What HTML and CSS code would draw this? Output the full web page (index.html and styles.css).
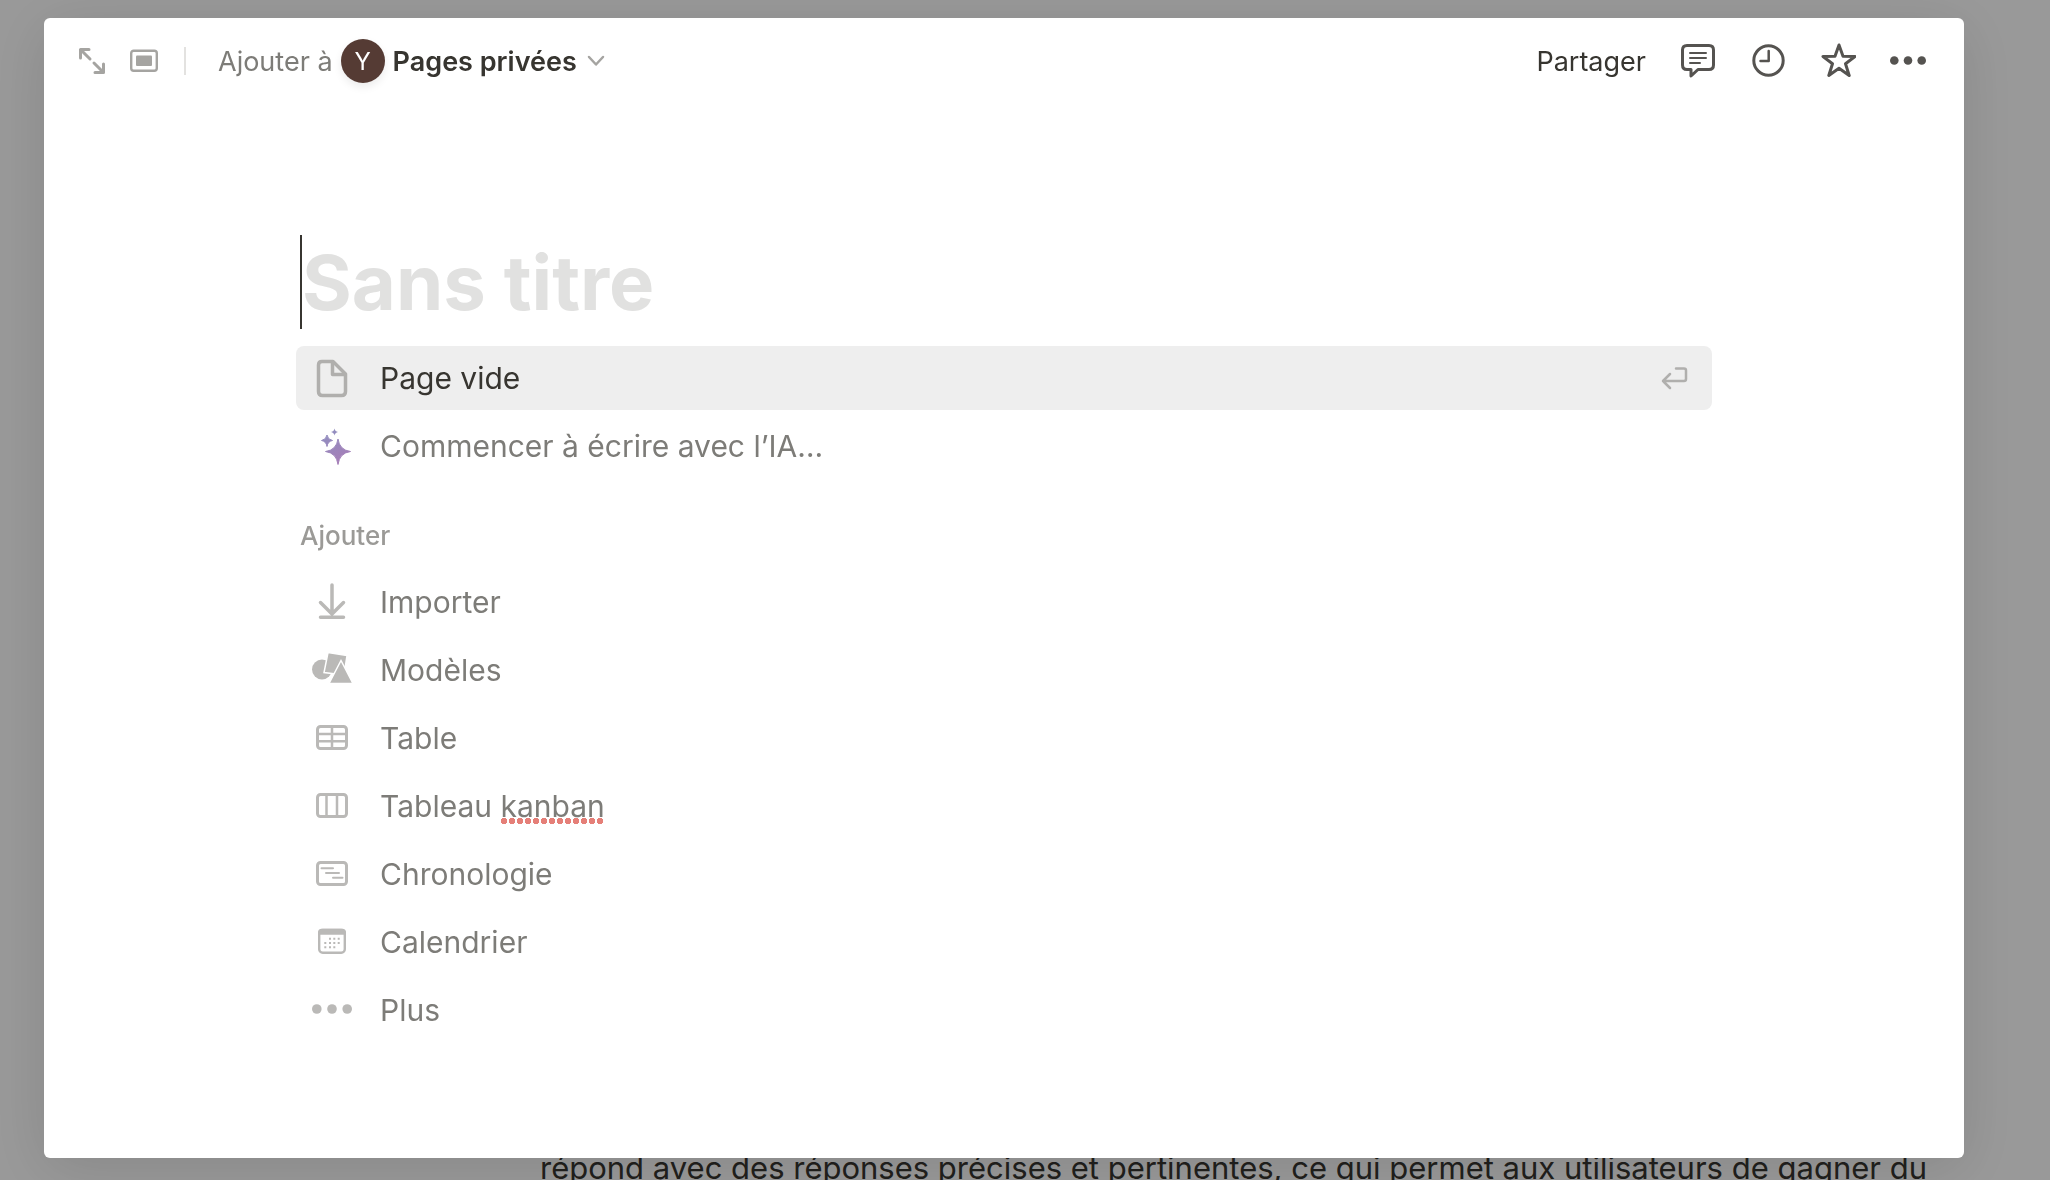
FILE: index.html
```html
<!DOCTYPE html>
<html lang="fr">
<head>
    <meta charset="UTF-8">
    <title>Sans titre</title>
    <link rel="stylesheet" href="styles.css">
</head>
<body>
<main class="page">
    <p class="page-text">répond avec des réponses précises et pertinentes, ce qui permet aux utilisateurs de gagner du</p>
</main>

<div class="overlay">
    <div class="modal" role="dialog" aria-label="Nouvelle page">
        <header class="topbar">
            <div class="topbar-left">
                <button type="button" class="icon-btn" aria-label="Ouvrir en pleine page">
                    <svg width="28" height="28" viewBox="0 0 28 28" fill="none" stroke="#a5a4a1" stroke-width="3" stroke-linecap="round" stroke-linejoin="round">
                        <path d="M2.500 11V2.500H11M2.500 2.500L12 12M16 16L25.500 25.500M25.500 17V25.500H17"/>
                    </svg>
                </button>
                <button type="button" class="icon-btn" aria-label="Changer l'affichage">
                    <svg width="28" height="28" viewBox="0 0 28 28">
                        <rect x="1.200" y="3.700" width="25.600" height="20" rx="2.500" fill="none" stroke="#a5a4a1" stroke-width="2.400"/>
                        <rect x="6" y="8.500" width="16" height="10.500" rx="1" fill="#a5a4a1"/>
                    </svg>
                </button>
                <span class="divider"></span>
                <button type="button" class="location">
                    <span class="muted">Ajouter à</span>
                    <span class="avatar">Y</span>
                    <span class="location-name">Pages privées</span>
                    <svg class="chevron" width="18" height="12" viewBox="0 0 18 12" fill="none" stroke="#a5a4a1" stroke-width="2.500" stroke-linecap="round" stroke-linejoin="round">
                        <path d="M2 2L9 9.500L16 2"/>
                    </svg>
                </button>
            </div>
            <div class="topbar-right">
                <button type="button" class="share">Partager</button>
                <button type="button" class="icon-btn" aria-label="Commentaires">
                    <svg width="36" height="36" viewBox="0 0 36 36" fill="none" stroke="#555350" stroke-width="3" stroke-linecap="round" stroke-linejoin="round">
                        <path d="M7 2.500H29Q33.500 2.500 33.500 7V22Q33.500 26.500 29 26.500H18L11 33V26.500H7Q2.500 26.500 2.500 22V7Q2.500 2.500 7 2.500Z"/>
                        <path stroke-width="2" d="M10 10H26M10 15H26M10 20H20"/>
                    </svg>
                </button>
                <button type="button" class="icon-btn" aria-label="Historique">
                    <svg width="36" height="36" viewBox="0 0 36 36" fill="none" stroke="#555350" stroke-width="3" stroke-linecap="round" stroke-linejoin="round">
                        <circle cx="18.500" cy="17.500" r="14.700"/>
                        <path stroke-width="2.500" d="M18.700 8V18H10.500"/>
                    </svg>
                </button>
                <button type="button" class="icon-btn" aria-label="Favoris">
                    <svg width="36" height="36" viewBox="0 0 36 36" fill="none" stroke="#555350" stroke-width="3" stroke-linejoin="round">
                        <path d="M19 2L23 13.200L35 13.500L25.500 20.700L29.200 32.500L19 25.300L8.800 32.500L12.500 20.700L3 13.500L15 13.200Z"/>
                    </svg>
                </button>
                <button type="button" class="icon-btn" aria-label="Autres actions">
                    <svg width="36" height="36" viewBox="0 0 36 36" fill="#555350">
                        <circle cx="4.300" cy="17.500" r="4.300"/>
                        <circle cx="18" cy="17.500" r="4.300"/>
                        <circle cx="31.700" cy="17.500" r="4.300"/>
                    </svg>
                </button>
            </div>
        </header>

        <div class="content">
            <div class="title">
                <input type="text" class="title-input" placeholder="Sans titre" aria-label="Titre de la page">
            </div>

            <div class="menu">
                <button type="button" class="item active">
                    <svg class="item-icon" viewBox="0 0 40 40" fill="none" stroke="#b0afad" stroke-width="3.500" stroke-linejoin="round">
                        <path d="M10 3.500H21L33.500 16V33.500Q33.500 37.500 29.500 37.500H10.500Q6.500 37.500 6.500 33.500V7Q6.500 3.500 10 3.500Z"/>
                        <path d="M20.500 4V16.500H33"/>
                    </svg>
                    <span>Page vide</span>
                    <svg class="enter" width="28" height="24" viewBox="0 0 28 24" fill="none" stroke="#b0afad" stroke-width="2.500" stroke-linecap="round" stroke-linejoin="round">
                        <path d="M16 2.500H24Q26 2.500 26 4.500V13Q26 15 24 15H3M10 8L3 15L10 22"/>
                    </svg>
                </button>
                <button type="button" class="item">
                    <svg class="item-icon" viewBox="0 0 40 40">
                        <defs>
                            <linearGradient id="spark" gradientUnits="userSpaceOnUse" x1="14" y1="4" x2="30" y2="34">
                                <stop offset="0" stop-color="#8f8fc0"/>
                                <stop offset="1" stop-color="#a57fb8"/>
                            </linearGradient>
                        </defs>
                        <g fill="url(#spark)">
                            <path d="M26 13Q27.500 24 38.500 25.500Q27.500 27 26 38.500Q24.500 27 13.500 25.500Q24.500 24 26 13Z" stroke="url(#spark)" stroke-width="1"/>
                            <path d="M15 9Q15.800 13.700 20.500 14.500Q15.800 15.300 15 20.500Q14.200 15.300 9.500 14.500Q14.200 13.700 15 9Z" stroke="url(#spark)" stroke-width="1"/>
                            <path d="M22.500 2.500Q23 5.500 26 6Q23 6.500 22.500 9.500Q22 6.500 19 6Q22 5.500 22.500 2.500Z"/>
                        </g>
                    </svg>
                    <span>Commencer à écrire avec l’IA…</span>
                </button>
            </div>

            <h2 class="section">Ajouter</h2>

            <div class="menu">
                <button type="button" class="item">
                    <svg class="item-icon" viewBox="0 0 40 40" fill="none" stroke="#bab9b7" stroke-width="3.500" stroke-linecap="round" stroke-linejoin="round">
                        <path d="M20 3V32M8.500 20.500L20 32L31.500 20.500M8.500 35.300H31.500"/>
                    </svg>
                    <span>Importer</span>
                </button>
                <button type="button" class="item">
                    <svg class="item-icon" viewBox="0 0 40 40" fill="#bab9b7">
                        <circle cx="10" cy="19.500" r="10"/>
                        <path d="M16 2.500L35 5.500L32 25L12 22.500Z" stroke="#fff" stroke-width="1.500"/>
                        <path d="M29 10.500L41 33.500H17Z" stroke="#fff" stroke-width="1.500"/>
                    </svg>
                    <span>Modèles</span>
                </button>
                <button type="button" class="item">
                    <svg class="item-icon" viewBox="0 0 40 40" fill="none" stroke="#bab9b7" stroke-width="3">
                        <rect x="5.500" y="8.500" width="29" height="22" rx="3"/>
                        <path stroke-width="2.500" d="M20 8V31M6 16H34M6 23.300H34"/>
                    </svg>
                    <span>Table</span>
                </button>
                <button type="button" class="item">
                    <svg class="item-icon" viewBox="0 0 40 40" fill="none" stroke="#bab9b7" stroke-width="3">
                        <rect x="5.500" y="8.500" width="29" height="22" rx="3"/>
                        <path stroke-width="2.500" d="M14.500 8V31M25 8V31"/>
                    </svg>
                    <span>Tableau <span class="misspelled">kanban</span></span>
                </button>
                <button type="button" class="item">
                    <svg class="item-icon" viewBox="0 0 40 40" fill="none" stroke="#bab9b7" stroke-width="3">
                        <rect x="5.500" y="8.500" width="29" height="22" rx="3"/>
                        <path stroke-width="2" stroke-linecap="round" d="M9.500 14.300H21M14 19H27M21 23.700H30.500"/>
                    </svg>
                    <span>Chronologie</span>
                </button>
                <button type="button" class="item">
                    <svg class="item-icon" viewBox="0 0 40 40" fill="#bab9b7">
                        <rect x="7.200" y="8" width="25.600" height="22.800" rx="3.500" fill="none" stroke="#bab9b7" stroke-width="2.400"/>
                        <path d="M6 12.700V10.500Q6 6.800 9.700 6.800H30.300Q34 6.800 34 10.500V12.700Z"/>
                        <path d="M17 15.700h2v2h-2zM21.300 15.700h2v2h-2zM25.700 15.700h2v2h-2zM12.300 20h2v2h-2zM17 20h2v2h-2zM21.300 20h2v2h-2zM25.700 20h2v2h-2zM12.300 24.300h2v2h-2zM17 24.300h2v2h-2zM21.300 24.300h2v2h-2z"/>
                    </svg>
                    <span>Calendrier</span>
                </button>
                <button type="button" class="item">
                    <svg class="item-icon" viewBox="0 0 40 40" fill="#bab9b7">
                        <circle cx="4.800" cy="19" r="4.800"/>
                        <circle cx="20" cy="19" r="4.800"/>
                        <circle cx="35.200" cy="19" r="4.800"/>
                    </svg>
                    <span>Plus</span>
                </button>
            </div>
        </div>
    </div>
</div>
</body>
</html>
```
FILE: styles.css
```css
* {
    box-sizing: border-box;
}
body {
    margin: 0;
    font-family: Inter, "Liberation Sans", sans-serif;
    color: #373530;
    background-color: white;
}
button {
    font: inherit;
    color: inherit;
    background: none;
    border: none;
    padding: 0;
    cursor: pointer;
}
svg {
    display: block;
    flex-shrink: 0;
}

/* page behind the dialog */
.page {
    display: flex;
    align-items: flex-end;
    height: 100vh;
    padding-left: 540px;
    overflow: hidden;
}
.page-text {
    margin: 0 0 -12px;
    font-size: 31px;
    line-height: 48px;
    white-space: nowrap;
}

.overlay {
    position: fixed;
    inset: 0;
    display: flex;
    padding: 18px 86px 22px 44px;
    background-color: rgba(0, 0, 0, 0.4);
}
.modal {
    flex: 1;
    background-color: white;
    border-radius: 6px;
    box-shadow: 0 10px 60px rgba(0, 0, 0, 0.12);
}

.topbar {
    display: flex;
    justify-content: space-between;
    align-items: center;
    height: 86px;
    padding: 0 38px 0 34px;
    font-size: 27px;
}
.topbar-left,
.topbar-right,
.location {
    display: flex;
    align-items: center;
}
.topbar-left {
    gap: 24px;
}
.topbar-right {
    gap: 34px;
}
.divider {
    width: 2px;
    height: 28px;
    margin: 0 2px;
    background-color: #e3e2e0;
}
.location {
    gap: 8px;
    margin-left: 6px;
}
.muted {
    color: #7d7c78;
}
.avatar {
    display: flex;
    align-items: center;
    justify-content: center;
    width: 44px;
    height: 44px;
    border-radius: 50%;
    font-size: 24px;
    color: white;
    background-color: #553b34;
    box-shadow: 0 4px 8px rgba(0, 0, 0, 0.08);
}
.location-name {
    font-weight: 600;
}
.chevron {
    margin-left: 2px;
}

.content {
    padding: 131px 252px 0;
}
.title {
    padding-left: 4px;
}
.title-input {
    display: block;
    width: 100%;
    height: 94px;
    padding: 0;
    border: none;
    border-left: 2px solid #373530;
    outline: none;
    font: bold 76px Inter, "Liberation Sans", sans-serif;
    color: #373530;
}
.title-input::placeholder {
    color: #e1e1e0;
    opacity: 1;
}

.menu {
    display: flex;
    flex-direction: column;
    gap: 4px;
}
.title + .menu {
    margin-top: 17px;
}
.item {
    display: flex;
    align-items: center;
    gap: 28px;
    height: 64px;
    padding: 0 24px 0 16px;
    border-radius: 8px;
    font-size: 30px;
    text-align: left;
    color: #7d7c78;
}
.item.active {
    color: #373530;
    background-color: #eeeeee;
}
.item-icon {
    width: 40px;
    height: 40px;
}
.enter {
    margin-left: auto;
}
.misspelled {
    background: radial-gradient(circle, #e57f78 3px, transparent 3px) left 0 bottom 0 / 8px 6px repeat-x;
}
.section {
    margin: 40px 0 16px 4px;
    font-size: 26px;
    font-weight: 500;
    line-height: 36px;
    color: #9b9a97;
}
```
